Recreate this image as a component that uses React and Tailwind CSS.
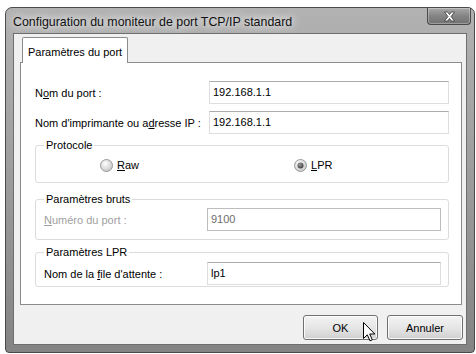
import React from 'react';

function Radio({ checked }) {
  return (
    <svg width="13" height="13" viewBox="0 0 13 13" className="shrink-0">
      <defs>
        <radialGradient id={checked ? 'rgOn' : 'rgOff'} cx="40%" cy="35%" r="70%">
          <stop offset="0%" stopColor="#ffffff" />
          <stop offset="100%" stopColor="#c4c4c4" />
        </radialGradient>
        <radialGradient id="dot" cx="40%" cy="35%" r="70%">
          <stop offset="0%" stopColor="#9a9a9a" />
          <stop offset="100%" stopColor="#3c3c3c" />
        </radialGradient>
      </defs>
      <circle cx="6.5" cy="6.5" r="6" fill={`url(#${checked ? 'rgOn' : 'rgOff'})`} stroke="#9a9a9a" />
      {checked && <circle cx="6.5" cy="6.5" r="3" fill="url(#dot)" />}
    </svg>
  );
}

function GroupBox({ title, className, children }) {
  return (
    <div className={`border border-[#dcdcdc] rounded-[3px] flex flex-col ${className}`}>
      <span className="-mt-[8px] ml-[8px] px-[2px] bg-white w-fit leading-[14px]">{title}</span>
      {children}
    </div>
  );
}

const inputCls = 'h-[23px] border border-[#dedede] border-t-[#acacac] bg-white pl-[3px] flex items-center text-black';

export default function App() {
  return (
    <div className="w-[476px] h-[354px] bg-white pl-[5px] pt-[7px] relative overflow-hidden font-['Liberation_Sans',Arial,sans-serif] text-[11px] text-black">
      {/* Window frame */}
      <div className="w-[470px] h-[346px] rounded-t-[7px] rounded-b-[4px] border border-[#4a4a4a] bg-gradient-to-b from-[#b2b2b2] via-[#9c9c9c] to-[#848484] flex flex-col">
        {/* Title bar */}
        <div className="h-[25px] flex items-start justify-between pl-[7px] pr-[3px]">
          <span className="mt-[7px] text-[12.4px] leading-[15px] text-[#111] [text-shadow:0_0_6px_rgba(255,255,255,0.95),0_0_12px_rgba(255,255,255,0.85),0_0_18px_rgba(255,255,255,0.6)]">
            Configuration du moniteur de port TCP/IP standard
          </span>
          <div className="w-[44px] h-[17px] rounded-b-[4px] border border-t-0 border-[#4a4a4a] bg-gradient-to-b from-[#a8a8a8] via-[#848484] to-[#727272] shadow-[inset_0_0_0_1px_rgba(255,255,255,0.3)] flex items-center justify-center">
            <svg width="13" height="11" viewBox="0 0 13 11">
              <path d="M1.5 1 H4.5 L6.5 3.5 L8.5 1 H11.5 L8 5.5 L11.5 10 H8.5 L6.5 7.5 L4.5 10 H1.5 L5 5.5 Z" fill="#ffffff" stroke="#3a3a3a" strokeWidth="0.8" strokeLinejoin="round" />
            </svg>
          </div>
        </div>

        {/* Client area */}
        <div className="mx-[7px] h-[312px] bg-[#f0f0f0] border border-[#6e6e6e] flex flex-col pt-[3px]">
          {/* Tab header */}
          <div className="ml-[8px] w-[106px] h-[26px] bg-white border border-b-0 border-[#8c8c8c] rounded-t-[2px] pl-[5px] pt-[7px] leading-[14px] relative z-10 -mb-px">
            Paramètres du port
          </div>

          {/* Tab panel */}
          <div className="ml-[6px] w-[442px] h-[243px] bg-white border border-[#8c8c8c] flex flex-col pl-[14px] pr-[12px] pt-[18px]">
            <div className="flex items-center">
              <span className="flex-1 leading-[14px]">
                N<span className="underline">o</span>m du port :
              </span>
              <div className={`${inputCls} w-[240px]`}>192.168.1.1</div>
            </div>
            <div className="flex items-center mt-[7px]">
              <span className="flex-1 leading-[14px]">
                Nom d'imprimante ou a<span className="underline">d</span>resse IP :
              </span>
              <div className={`${inputCls} w-[240px]`}>192.168.1.1</div>
            </div>

            <GroupBox title="Protocole" className="mt-[11px] h-[38px]">
              <div className="flex items-center pl-[64px] mt-[6px] leading-[14px]">
                <div className="w-[194px] flex items-center gap-[4px]">
                  <Radio checked={false} />
                  <span>
                    <span className="underline">R</span>aw
                  </span>
                </div>
                <div className="flex items-center gap-[4px]">
                  <Radio checked />
                  <span>
                    <span className="underline">L</span>PR
                  </span>
                </div>
              </div>
            </GroupBox>

            <GroupBox title="Paramètres bruts" className="mt-[16px] h-[41px]">
              <div className="flex items-center pl-[8px] pr-[7px] mt-[2px]">
                <span className="flex-1 leading-[14px] text-[#a0a0a0]">
                  <span className="underline">N</span>uméro du port :
                </span>
                <div className="w-[234px] h-[23px] border border-[#bdbdbd] bg-white pl-[3px] flex items-center text-[#6d6d6d]">
                  9100
                </div>
              </div>
            </GroupBox>

            <GroupBox title="Paramètres LPR" className="mt-[12px] h-[35px]">
              <div className="flex items-center pl-[8px] pr-[7px] mt-[3px]">
                <span className="flex-1 leading-[14px]">
                  Nom de la <span className="underline">f</span>ile d'attente :
                </span>
                <div className={`${inputCls} w-[234px]`}>lp1</div>
              </div>
            </GroupBox>
          </div>

          {/* Buttons */}
          <div className="self-end mr-[3px] mt-[10px] flex gap-[9px]">
            <button className="w-[75px] h-[25px] rounded-[3px] border border-[#707070] bg-gradient-to-b from-[#f3f3f3] via-[#e6e6e6] to-[#d0d0d0] shadow-[inset_0_0_0_1px_rgba(255,255,255,0.8)] text-[11px] leading-[14px]">
              OK
            </button>
            <button className="w-[76px] h-[25px] rounded-[3px] border border-[#707070] bg-gradient-to-b from-[#f3f3f3] via-[#e6e6e6] to-[#d0d0d0] shadow-[inset_0_0_0_1px_rgba(255,255,255,0.8)] text-[11px] leading-[14px]">
              Annuler
            </button>
          </div>
        </div>
      </div>

      {/* Mouse cursor */}
      <svg className="absolute left-[363px] top-[322px]" width="13" height="20" viewBox="0 0 13 20">
        <path d="M0.5 0.5 V16.5 L4.3 12.8 L7 18.8 L9.3 17.8 L6.7 12 H11.8 Z" fill="#ffffff" stroke="#000000" strokeWidth="1" strokeLinejoin="miter" />
      </svg>
    </div>
  );
}
